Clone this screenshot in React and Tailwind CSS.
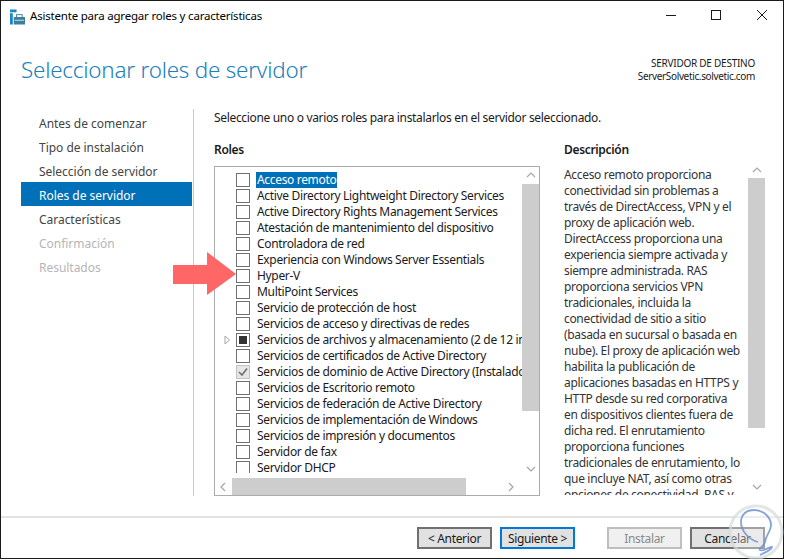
import React from 'react';

const roles = [
  { name: 'Acceso remoto', selected: true },
  { name: 'Active Directory Lightweight Directory Services' },
  { name: 'Active Directory Rights Management Services' },
  { name: 'Atestación de mantenimiento del dispositivo' },
  { name: 'Controladora de red' },
  { name: 'Experiencia con Windows Server Essentials' },
  { name: 'Hyper-V' },
  { name: 'MultiPoint Services' },
  { name: 'Servicio de protección de host' },
  { name: 'Servicios de acceso y directivas de redes' },
  { name: 'Servicios de archivos y almacenamiento (2 de 12 instalados)', partial: true },
  { name: 'Servicios de certificados de Active Directory' },
  { name: 'Servicios de dominio de Active Directory (Instalado)', checked: true },
  { name: 'Servicios de Escritorio remoto' },
  { name: 'Servicios de federación de Active Directory' },
  { name: 'Servicios de implementación de Windows' },
  { name: 'Servicios de impresión y documentos' },
  { name: 'Servidor de fax' },
  { name: 'Servidor DHCP' },
];

const steps = [
  { name: 'Antes de comenzar' },
  { name: 'Tipo de instalación' },
  { name: 'Selección de servidor' },
  { name: 'Roles de servidor', active: true },
  { name: 'Características' },
  { name: 'Confirmación', off: true },
  { name: 'Resultados', off: true },
];

const descLines = [
  'Acceso remoto proporciona',
  'conectividad sin problemas a',
  'través de DirectAccess, VPN y el',
  'proxy de aplicación web.',
  'DirectAccess proporciona una',
  'experiencia siempre activada y',
  'siempre administrada. RAS',
  'proporciona servicios VPN',
  'tradicionales, incluida la',
  'conectividad de sitio a sitio',
  '(basada en sucursal o basada en',
  'nube). El proxy de aplicación web',
  'habilita la publicación de',
  'aplicaciones basadas en HTTPS y',
  'HTTP desde su red corporativa',
  'en dispositivos clientes fuera de',
  'dicha red. El enrutamiento',
  'proporciona funciones',
  'tradicionales de enrutamiento, lo',
  'que incluye NAT, así como otras',
  'opciones de conectividad. RAS y',
];

const Chevron = ({ dir }) => {
  const d = {
    up: 'M1 6 L5 2 L9 6',
    down: 'M1 2 L5 6 L9 2',
    left: 'M6 1 L2 5 L6 9',
    right: 'M2 1 L6 5 L2 9',
  }[dir];
  return (
    <svg width="10" height="10" viewBox="0 0 10 10" fill="none" stroke="#a6a6a6" strokeWidth="1.2">
      <path d={d} />
    </svg>
  );
};

const RoleRow = ({ role }) => (
  <div className="flex h-4 items-center whitespace-nowrap">
    <div className="flex w-[21px] shrink-0 justify-start pl-[9px]">
      {role.partial && (
        <svg width="7" height="10" viewBox="0 0 7 10" fill="none" stroke="#a6a6a6">
          <path d="M1 1 L5.5 5 L1 9 Z" />
        </svg>
      )}
    </div>
    <div
      className={`flex h-[14px] w-[14px] shrink-0 items-center justify-center border ${
        role.checked ? 'border-[#c4c4c4] bg-[#e6e6e6]' : 'border-[#707070] bg-white'
      }`}
    >
      {role.partial && <div className="h-2 w-2 bg-[#333333]" />}
      {role.checked && (
        <svg width="10" height="10" viewBox="0 0 10 10" fill="none" stroke="#707070" strokeWidth="1.6">
          <path d="M1 5 L4 8 L9 1.5" />
        </svg>
      )}
    </div>
    <span className={`ml-[6px] shrink-0 px-px leading-4 ${role.selected ? 'bg-[#0070b9] text-white' : 'text-[#1a1a1a]'}`}>
      {role.name}
    </span>
  </div>
);

const DialogButton = ({ label, primary, disabled }) => (
  <button
    className={`h-[22px] w-[75px] border-2 pt-px text-[12px] leading-none ${
      primary
        ? 'border-[#0078d7] bg-[#e1e1e1] text-[#1a1a1a]'
        : disabled
          ? 'border-[#bfbfbf] bg-[#f0f0f0] text-[#8a8a8a]'
          : 'border-[#707070] bg-[#e1e1e1] text-[#1a1a1a]'
    }`}
  >
    {label}
  </button>
);

export default function App() {
  return (
    <div className="relative h-[560px] w-[786px] overflow-hidden bg-white font-['Noto_Sans','Open_Sans',sans-serif] text-[12px] tracking-[-0.33px] text-[#1a1a1a]">
      <div className="flex h-[559px] w-[784px] flex-col border border-[#1a1a1a]">
        {/* Title bar */}
        <div className="flex h-[30px] shrink-0 items-center">
          <svg className="ml-[9px] mt-[1px]" width="15" height="16" viewBox="0 0 16 16">
            <rect x="0" y="0" width="7" height="3" fill="#1b87c9" />
            <rect x="0" y="4" width="3" height="12" fill="#1b87c9" />
            <rect x="4" y="8" width="12" height="8" fill="#3d7f9c" />
            <rect x="7" y="5.5" width="6" height="3" fill="none" stroke="#3d7f9c" />
            <rect x="5" y="11" width="10" height="1" fill="#c8dfe9" />
          </svg>
          <span className="ml-[5px] text-[11.5px] tracking-[-0.2px] text-black">Asistente para agregar roles y características</span>
          <div className="ml-auto flex items-center">
            <svg width="46" height="30" viewBox="0 0 46 30" stroke="#1a1a1a" fill="none">
              <path d="M21 14.5 H31" />
            </svg>
            <svg width="46" height="30" viewBox="0 0 46 30" stroke="#1a1a1a" fill="none">
              <rect x="20.5" y="9.5" width="9" height="9" />
            </svg>
            <svg width="46" height="30" viewBox="0 0 46 30" stroke="#1a1a1a" fill="none">
              <path d="M20 9 L30 19 M30 9 L20 19" />
            </svg>
          </div>
        </div>

        {/* Header */}
        <div className="flex h-[78px] shrink-0 items-start justify-between pl-5 pr-7">
          <h1 className="mt-[20px] text-[22.4px] font-light leading-[38px] tracking-[-0.2px] text-[#2080ba]">
            Seleccionar roles de servidor
          </h1>
          <div className="mt-[26px] text-right text-[10px] leading-[13px]">
            <div className="tracking-[-0.25px]">SERVIDOR DE DESTINO</div>
            <div className="tracking-[-0.35px]">ServerSolvetic.solvetic.com</div>
          </div>
        </div>

        {/* Body */}
        <div className="flex h-[387px] shrink-0">
          <nav className="ml-5 w-[171px] shrink-0 pt-px tracking-[-0.03px]">
            {steps.map((s) => (
              <div
                key={s.name}
                className={`flex h-6 items-center pl-[18px] pt-[4px] ${
                  s.active ? 'bg-[#0070b9] text-white' : s.off ? 'text-[#b5b5b5]' : 'text-[#444444]'
                }`}
              >
                {s.name}
              </div>
            ))}
          </nav>
          <div className="ml-px w-px bg-[#c8c8c8]" />
          <div className="ml-5 flex-1">
            <p className="mt-px h-4 leading-4">Seleccione uno o varios roles para instalarlos en el servidor seleccionado.</p>
            <div className="mt-[16px] flex">
              <div className="w-[326px] shrink-0">
                <div className="h-4 font-semibold leading-4">Roles</div>
                <div className="mt-2 flex h-[330px] flex-col border border-[#ababab]">
                  <div className="flex min-h-0 flex-1">
                    <div className="h-[306px] min-w-0 flex-1 overflow-hidden pt-[5px]">
                      {roles.map((r) => (
                        <RoleRow key={r.name} role={r} />
                      ))}
                    </div>
                    <div className="flex w-[17px] shrink-0 flex-col items-center">
                      <div className="flex h-[17px] items-center justify-center"><Chevron dir="up" /></div>
                      <div className="h-[227px] w-full bg-[#cdcdcd]" />
                      <div className="mt-auto flex h-[17px] items-center justify-center"><Chevron dir="down" /></div>
                    </div>
                  </div>
                  <div className="flex h-[17px] shrink-0 items-center">
                    <div className="flex w-[17px] items-center justify-center"><Chevron dir="left" /></div>
                    <div className="h-full w-[234px] bg-[#cdcdcd]" />
                    <div className="ml-auto mr-[19px] flex w-[17px] items-center justify-center"><Chevron dir="right" /></div>
                  </div>
                </div>
              </div>
              <div className="ml-6 w-[201px]">
                <div className="h-4 font-semibold leading-4">Descripción</div>
                <div className="mt-[8px] flex">
                  <div className="h-[329px] w-[184px] shrink-0 overflow-hidden whitespace-nowrap pt-px leading-4 text-[#333333]">
                    {descLines.map((l) => (
                      <div key={l} className="h-4">{l}</div>
                    ))}
                  </div>
                  <div className="flex h-[330px] w-[17px] shrink-0 flex-col items-center">
                    <div className="flex h-[12px] items-start justify-center"><Chevron dir="up" /></div>
                    <div className="h-[250px] w-full bg-[#cdcdcd]" />
                    <div className="mt-auto flex h-[17px] items-center justify-center"><Chevron dir="down" /></div>
                  </div>
                </div>
              </div>
            </div>
          </div>
        </div>

        {/* Footer */}
        <div className="mt-[20px] flex flex-1 items-start border-t-2 border-[#e3e3e3] pt-[9px]">
          <div className="ml-[416px] flex">
            <DialogButton label="< Anterior" />
            <div className="ml-2"><DialogButton label="Siguiente >" primary /></div>
            <div className="ml-8"><DialogButton label="Instalar" disabled /></div>
            <div className="ml-2"><DialogButton label="Cancelar" /></div>
          </div>
        </div>
      </div>

      {/* Red arrow over the list */}
      <svg className="absolute left-[173px] top-[252px]" width="64" height="44" viewBox="0 0 64 44">
        <path d="M0 13 H34 V0 L63 22 L34 43 V32 H0 Z" fill="#ff6666" />
      </svg>

      {/* Watermark */}
      <svg className="absolute left-[716px] top-[500px]" width="70" height="60" viewBox="0 0 70 60" fill="none">
        <circle cx="40" cy="32" r="26" fill="#ffffff" fillOpacity="0.35" stroke="#d5dcdc" strokeOpacity="0.7" strokeWidth="3" />
        <path
          d="M42 42 C34 40 25 32 25 22 C25 14 31 10 38 10 C47 10 55 17 55 25 C55 31 50 35 49 42 C48 47 42 48 44 50 C47 52 55 46 56 47 C55 51 47 53 44 55"
          stroke="#6f93d0"
          strokeOpacity="0.85"
          strokeWidth="1.8"
        />
      </svg>
    </div>
  );
}
